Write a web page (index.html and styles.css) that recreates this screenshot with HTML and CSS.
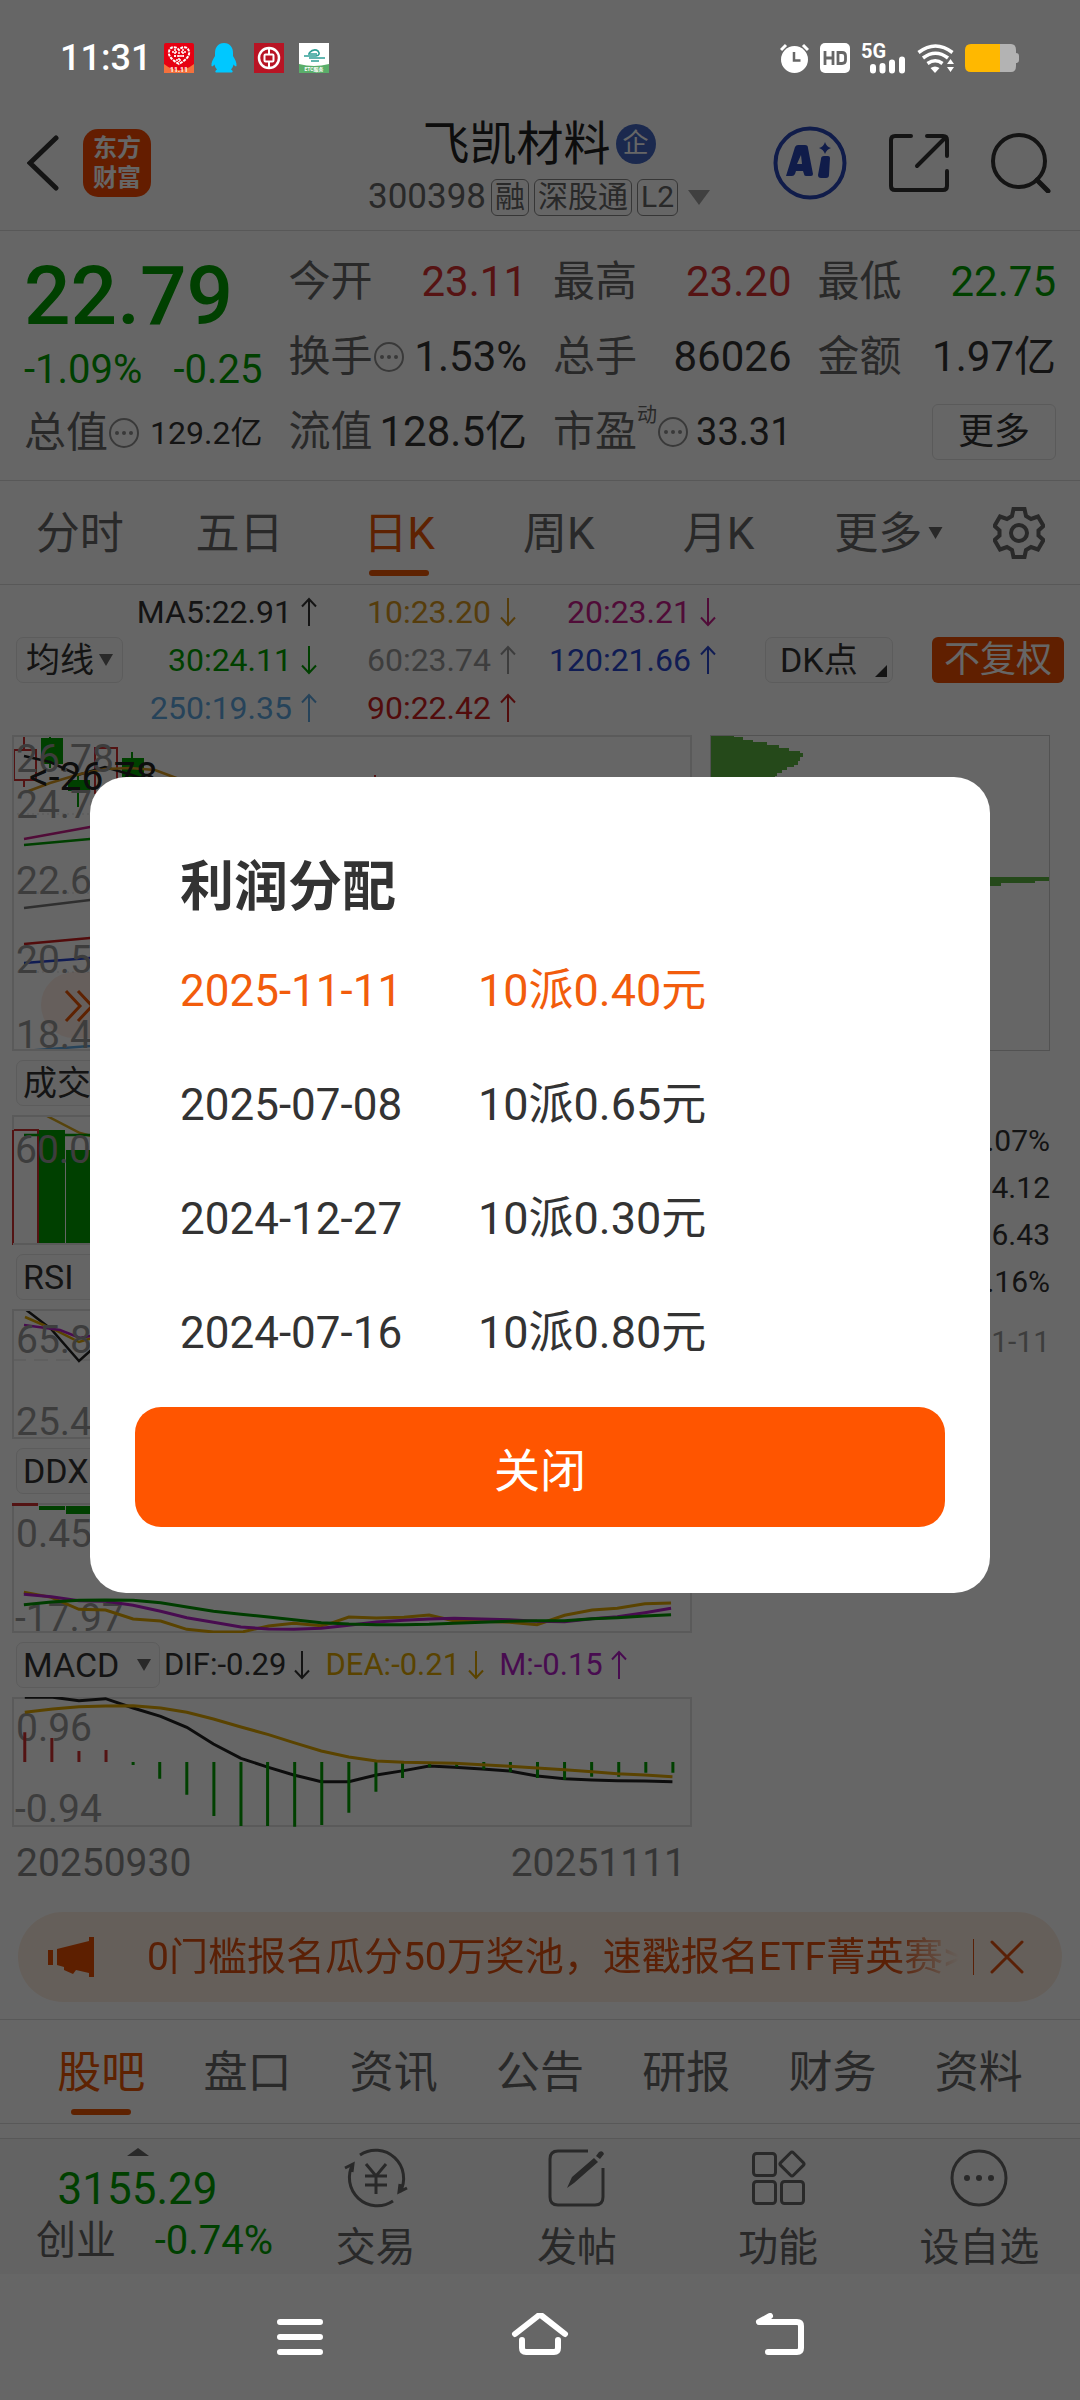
FILE: index.html
```html
<!DOCTYPE html>
<html lang="zh-CN">
<head>
<meta charset="utf-8">
<meta name="viewport" content="width=device-width, initial-scale=1">
<title>飞凯材料 300398</title>
<link rel="stylesheet" href="styles.css">
</head>
<body>
<svg class="defs" aria-hidden="true">
  <symbol id="up" viewBox="0 0 16 30"><path d="M8 29V2M1 9.500l7-7.500 7 7.500" fill="none" stroke="currentColor" stroke-width="2"/></symbol>
  <symbol id="down" viewBox="0 0 16 30"><path d="M8 1v27M1 20.500l7 7.500 7-7.500" fill="none" stroke="currentColor" stroke-width="2"/></symbol>
  <symbol id="caret" viewBox="0 0 14 12"><path d="M0 0h14L7 12z" fill="currentColor"/></symbol>
  <symbol id="more" viewBox="0 0 32 32"><circle cx="16" cy="16" r="14" fill="none" stroke="currentColor" stroke-width="2"/><g fill="currentColor"><circle cx="9" cy="16" r="2"/><circle cx="16" cy="16" r="2"/><circle cx="23" cy="16" r="2"/></g></symbol>
</svg>
<div class="screen">
  <div class="status">
    <time class="clock">11:31</time>
    <svg class="app" viewBox="0 0 30 30"><rect width="30" height="30" rx="2" fill="#e60012"/><path d="M0 21q15 12 30 0v9H0z" fill="#f5703c"/><path d="M15 21C8 17 4 13 5 8.500 6 3 12 3 15 7c3-4 9-4 10 1.500 1 4.500-3 8.500-10 12.500z" fill="#e60012" stroke="#fff" stroke-width="2" stroke-dasharray="3 1"/><path d="M8 9h5M17 9h5M10 13h10M12 17h6M11 6v9M19 6v9M15 9v10" stroke="#fff" stroke-width="1.500" stroke-dasharray="2 1"/><text x="15" y="29" font-size="7" font-weight="700" text-anchor="middle" fill="#fff">11.11</text></svg>
    <svg class="app" viewBox="0 0 30 30"><path d="M15 0C9 0 6 4.500 6 10v3c-2 3-4 7-3.500 10 1 1 2-.5 3-1.500.5 2 1 3.500 2.500 5-2 1-2.500 3 0 3h14c2.500 0 2-2 0-3 1.500-1.500 2-3 2.500-5 1 1 2 2.500 3 1.500.5-3-1.500-7-3.500-10v-3C24 4.500 21 0 15 0z" fill="#00c8ff"/></svg>
    <svg class="app" viewBox="0 0 30 30"><rect width="30" height="30" fill="#b81424"/><circle cx="15" cy="15" r="10" fill="none" stroke="#fff" stroke-width="2.500"/><rect x="10.500" y="11.500" width="9" height="7" rx="1" fill="none" stroke="#fff" stroke-width="2"/><path d="M15 5v6M15 19v6" stroke="#fff" stroke-width="2"/></svg>
    <svg class="app" viewBox="0 0 30 30"><rect width="30" height="30" fill="#fff"/><path d="M0 21q15 4 30 0v9H0z" fill="#5aae6a"/><path d="M10 10q5-5 9-2 3 4-2 5H5M9 11h9M10 15h16M12 18h8" fill="none" stroke="#2f9f96" stroke-width="1.600"/><text x="15" y="28" font-size="5" font-weight="700" text-anchor="middle" fill="#fff">ETC服务</text></svg>
    <span class="spacer"></span>
    <svg class="alarm" viewBox="0 0 29 30"><circle cx="14.500" cy="16.500" r="13.500" fill="#fff"/><path d="M1 7l5-5M28 7l-5-5" stroke="#fff" stroke-width="3"/><path d="M14 9v8.500h6.500" fill="none" stroke="#666" stroke-width="2.500"/></svg>
    <svg class="hd" viewBox="0 0 30 30"><rect width="30" height="30" rx="5" fill="#fff"/><path d="M5 8v14M13 8v14M5 15h8M18 9.500h4q3.500 0 3.500 3.500v4q0 3.500-3.500 3.500h-4z" fill="none" stroke="#666" stroke-width="2.800"/></svg>
    <svg class="signal" viewBox="0 0 45 30"><text x="0" y="15" font-size="20" font-weight="700" fill="#fff">5G</text><path d="M12 24v3.500M21.500 23v4.500M31 19.500v8M41 16.500v11" stroke="#fff" stroke-width="6" stroke-linecap="round"/></svg>
    <svg class="wifi" viewBox="0 0 37 30"><g fill="none" stroke="#fff" stroke-width="3.500"><path d="M1.500 9.500q17-13 34 0M6 15q12.500-9.500 25 0M10.500 20.500q8-5.500 15 0"/></g><path d="M13.500 25q4.500-3 9 0L18 30z" fill="#fff"/><path d="M30 21l3.500-5 3.500 5zM30 24l3.500 5 3.500-5z" fill="#fff"/></svg>
    <svg class="battery" viewBox="0 0 54 28"><path d="M6 0h40q5 0 5 6v3q3 0 3 3v4q0 3-3 3v3q0 6-5 6H6z" fill="#b3b3b3"/><path d="M35 0H6Q0 0 0 6v16q0 6 6 6h29z" fill="#ffb800"/></svg>
  </div>

  <header class="header">
    <div class="header-left">
      <button class="icon-btn" aria-label="返回"><svg class="back" viewBox="0 0 32 56"><path d="M29 3L3 28l26 25" fill="none" stroke="#333" stroke-width="5" stroke-linecap="round"/></svg></button>
      <a class="logo" href="#">东方<br>财富</a>
    </div>
    <div class="stock">
      <h1>飞凯材料<span class="corp">企</span></h1>
      <div class="code">300398<span class="tag">融</span><span class="tag">深股通</span><span class="tag">L2</span><svg class="drop" viewBox="0 0 22 15"><path d="M0 0h22L11 15z" fill="#a0a0a0"/></svg></div>
    </div>
    <div class="header-right">
      <button class="icon-btn" aria-label="AI"><svg class="ai" viewBox="0 0 74 74"><circle cx="37" cy="37" r="34.500" fill="none" stroke="#2a48b8" stroke-width="4"/><path d="M13 50L22 21q1-2 3-2h7q3 0 3 3l5 26q0 2-2 2h-5q-2 0-2-2l-1-3h-7l-1 3q-1 2-3 2zM24 38h5l-1-9zM48 33q0-3 3-3h4q2 0 2 2l-1 17q0 3-3 3h-5q-3 0-3-3zM52 16q1.500 5 6 6-4.500 1.500-6 6-1.500-4.500-6-6 4.500-1 6-6z" fill="#2a48b8" fill-rule="evenodd"/></svg></button>
      <button class="icon-btn" aria-label="分享"><svg class="share" viewBox="0 0 60 60"><path d="M22 3H6Q2 3 2 7v46q0 4 4 4h48q4 0 4-4V38M38 3h16q4 0 4 4v16M56 5L28 33" fill="none" stroke="#333" stroke-width="4" stroke-linecap="round"/></svg></button>
      <button class="icon-btn" aria-label="搜索"><svg class="search" viewBox="0 0 60 60"><circle cx="28" cy="28" r="26" fill="none" stroke="#333" stroke-width="4"/><path d="M46 47l11 11" stroke="#333" stroke-width="5" stroke-linecap="round"/></svg></button>
    </div>
  </header>

  <section class="quote">
    <div class="main">
      <strong class="price">22.79</strong>
      <div class="change"><span>-1.09%</span><span>-0.25</span></div>
      <div class="stat cap"><span>总值</span><svg class="info"><use href="#more"/></svg><b>129.2亿</b></div>
    </div>
    <div class="stat"><span>今开</span><b class="red">23.11</b></div>
    <div class="stat"><span>最高</span><b class="red">23.20</b></div>
    <div class="stat"><span>最低</span><b class="green">22.75</b></div>
    <div class="stat"><span>换手</span><svg class="info"><use href="#more"/></svg><b>1.53%</b></div>
    <div class="stat"><span>总手</span><b>86026</b></div>
    <div class="stat"><span>金额</span><b>1.97亿</b></div>
    <div class="stat"><span>流值</span><b>128.5亿</b></div>
    <div class="stat pe"><span>市盈</span><sup>动</sup><svg class="info"><use href="#more"/></svg><b>33.31</b></div>
    <div class="stat end"><button class="more">更多</button></div>
  </section>

  <nav class="periods">
    <a href="#">分时</a><a href="#">五日</a><a href="#" class="on">日K</a><a href="#">周K</a><a href="#">月K</a>
    <a href="#">更多<svg class="tri"><use href="#caret"/></svg></a>
    <button class="icon-btn gear-btn" aria-label="设置"><svg class="gear" viewBox="0 0 52 52"><path d="M20.500 2h11L33 9l5 3 7-2.500 5.500 9.500-5 4.500v5l5 4.500-5.500 9.500L38 40l-5 3-1.500 7h-11L19 43l-5-3-7 2.500L1.500 33l5-4.500v-5l-5-4.500L7 9.500l7 2.500 5-3z" fill="none" stroke="#666" stroke-width="4"/><circle cx="26" cy="26" r="8" fill="none" stroke="#666" stroke-width="4"/></svg></button>
  </nav>

  <section class="ma">
    <button class="chip">均线<svg class="caret"><use href="#caret"/></svg></button>
    <div class="ma-grid">
      <span class="c-dark">MA5:22.91<svg class="arr"><use href="#up"/></svg></span>
      <span class="c-gold">10:23.20<svg class="arr"><use href="#down"/></svg></span>
      <span class="c-pink">20:23.21<svg class="arr"><use href="#down"/></svg></span>
      <span class="c-green">30:24.11<svg class="arr"><use href="#down"/></svg></span>
      <span class="c-gray">60:23.74<svg class="arr"><use href="#up"/></svg></span>
      <span class="c-blue">120:21.66<svg class="arr"><use href="#up"/></svg></span>
      <span class="c-sky">250:19.35<svg class="arr"><use href="#up"/></svg></span>
      <span class="c-red">90:22.42<svg class="arr"><use href="#up"/></svg></span>
    </div>
    <button class="chip dk">DK点<svg class="corner" viewBox="0 0 12 12"><path d="M12 0v12H0z" fill="#333"/></svg></button>
    <button class="adjust">不复权</button>
  </section>

  <section class="charts">
    <div class="left">
      <svg class="chart" viewBox="0 0 680 316">
        <path class="grid dots" d="M0 79h680M0 158h680M0 237h680"/>
        <g fill="none" stroke="#d03030" stroke-width="2"><path d="M2 15h22v30H2zM12 0v15M12 45v7M83 13h22v45H83zM363 40v20"/></g>
        <path d="M29 3h22v26H29zM56 45h22v11H56zM110 23h22v19h-22z" fill="#00a000"/>
        <path d="M38 1v32M66 40v32M120 17v30" stroke="#00a000" stroke-width="2"/>
        <g fill="none" stroke-width="2.500">
          <path d="M12 21l26 6 28 13 27-8 27 8 14 5" stroke="#222"/>
          <path d="M14 57l24-9 30-9 25-5 25-1 25 2 24 9" stroke="#d8981e"/>
          <path d="M12 104l66-12 30-5" stroke="#c81e8c"/><path d="M12 110l66-6 30-3" stroke="#00a000"/>
          <path d="M12 173l66-8 30-3" stroke="#777"/><path d="M12 209l66-6 30-2" stroke="#cc1f1f"/>
          <path d="M12 228l66-5 30-2" stroke="#2a46d0"/><path d="M12 316l66-5 30-3" stroke="#60a8e0"/>
        </g>
        <rect x="29" y="237" width="100" height="66" rx="33" fill="#ff6a2a" fill-opacity=".12"/>
        <path d="M54 256l14 15-14 15M66 256l14 15-14 15" fill="none" stroke="#ea5504" stroke-width="3"/>
        <g class="axis"><text x="4" y="37">26.78</text><text x="4" y="83">24.7</text><text x="4" y="159">22.6</text><text x="4" y="238">20.5</text><text x="4" y="313">18.4</text></g>
        <text class="peak" x="17" y="55">&lt;-26.78</text>
        <rect class="frame" x="1" y="1" width="678" height="314"/>
      </svg>
      <div class="ind"><button class="chip">成交</button></div>
      <svg class="chart" viewBox="0 0 680 130">
        <path d="M27 15h26v114H27zM54 35h27v94H54z" fill="#00a000"/><rect x="1" y="15" width="25" height="114" fill="none" stroke="#d03030" stroke-width="2"/>
        <path d="M33 0l35 18 30 8" fill="none" stroke="#d8a81e" stroke-width="2.500"/><path d="M12 20h80" stroke="#00a000" stroke-width="2.500"/>
        <g class="axis"><text x="3" y="48">60.0</text></g>
        <path class="frame" d="M1 15V1h678v128H1"/>
      </svg>
      <div class="ind"><button class="chip">RSI<svg class="caret"><use href="#caret"/></svg></button></div>
      <svg class="chart" viewBox="0 0 680 130">
        <path class="grid dash" d="M0 51h680"/>
        <g fill="none" stroke-width="2.500"><path d="M13 0l26 20 28 32 20-18" stroke="#222"/><path d="M13 8l30 13 24 12 20-6" stroke="#e0a800"/><path d="M12 16l36 5 20 8 20-4" stroke="#b41ec8"/></g>
        <g class="axis"><text x="4" y="44">65.8</text><text x="4" y="126">25.4</text></g>
        <rect class="frame" x="1" y="1" width="678" height="128"/>
      </svg>
      <div class="ind"><button class="chip">DDX</button></div>
      <svg class="chart" viewBox="0 0 680 130">
        <g class="axis"><text x="4" y="44">0.45</text><text x="3" y="128">-17.97</text></g>
        <rect class="frame" x="1" y="1" width="678" height="128"/>
        <path d="M0 0h26v3H0z" fill="#d03030"/><path d="M27 3h26v4H27zM54 3h27v8H54z" fill="#00a000"/>
        <g class="series" transform="translate(-12 57) scale(.459 .3333)">
          <polyline stroke="#e0a800" points="52,97 112,112 172,148 230,150 290,177 350,183 407,208 465,216 530,215 585,198 640,190 700,197 720,190 760,171 820,174 880,172 935,165 990,183 1050,184 1110,187 1170,194 1230,166 1290,150 1345,145 1405,131 1462,129"/>
          <polyline stroke="#b41ec8" points="52,103 112,110 172,122 230,124 290,136 350,154 407,173 465,187 525,201 585,207 640,208 700,205 760,196 820,186 880,181 935,177 990,175 1050,177 1110,179 1170,184 1230,185 1290,176 1345,170 1405,158 1462,145"/>
          <polyline stroke="#009a00" points="52,134 112,126 172,121 230,120 290,121 350,128 407,141 465,154 525,163 585,171 640,179 700,188 760,192 820,194 880,194 935,193 990,190 1050,187 1110,184 1170,182 1230,182 1290,176 1345,173 1405,168 1462,164"/>
        </g>
      </svg>
      <div class="ind">
        <button class="chip wide">MACD<svg class="caret"><use href="#caret"/></svg></button>
        <span class="val c-dark">DIF:-0.29<svg class="arr"><use href="#down"/></svg></span>
        <span class="val c-dea">DEA:-0.21<svg class="arr"><use href="#down"/></svg></span>
        <span class="val c-violet">M:-0.15<svg class="arr"><use href="#up"/></svg></span>
      </div>
      <svg class="chart" viewBox="0 0 680 130">
        <g class="axis"><text x="4" y="44">0.96</text><text x="3" y="125">-0.94</text></g>
        <rect class="frame" x="1" y="1" width="678" height="128"/>
        <g class="series" transform="translate(-12 -137) scale(.459 .3333)">
          <polyline stroke="#222" points="54,412 115,412 172,422 230,416 290,444 350,469 407,502 465,552 525,595 585,622 640,645 700,665 760,665 820,645 880,632 935,618 990,622 1050,627 1110,633 1170,648 1230,656 1290,660 1345,662 1405,663 1465,665"/>
          <path stroke="#d03030" d="M54 606V517M113 606V534M172 606V573M231 606V570"/>
          <path stroke="#00a000" d="M290 606v9M348 606v50M407 606v98M466 606v162M525 606v192M583 606v192M642 606v194M701 606v189M760 606v152M819 606v89M877 606v48M936 606v16M995 606v14M1054 606v22M1112 606v30M1171 606v48M1230 606v53M1289 606v44M1348 606v44M1407 606v32M1466 606v32"/>
          <polyline stroke="#e0a800" points="54,457 115,447 172,440 230,438 290,437 350,444 407,457 465,477 525,501 585,524 640,548 700,573 760,591 820,603 880,607 935,608 990,610 1050,614 1110,619 1170,624 1230,629 1290,635 1345,641 1405,645 1465,650"/>
        </g>
      </svg>
      <div class="dates"><span>20250930</span><span>20251111</span></div>
    </div>
    <div class="right">
      <svg class="chart" viewBox="0 0 340 316">
        <path d="M0 0h24v2h9v3h10v2h14v3h12v3h10v3h11v2h3v4h-3v4h-2v4h-4v2h-7v3h-5v3h-5v3h-2v4h6v4H0z" fill="#5cb643"/>
        <path d="M200 142h139v4h-14v2h-34v3h-91z" fill="#5cb643"/>
        <rect x="0.500" y="0.500" width="339" height="315" fill="none" stroke="#ccc"/>
      </svg>
      <div class="figures"><span>.07%</span><span>4.12</span><span>6.43</span><span>.16%</span><span class="when">1-11</span></div>
    </div>
  </section>

  <aside class="banner">
    <svg class="horn" viewBox="0 0 46 40"><path d="M0 13h5v15H0zM9 12L41 4V0h5v40h-5v-4l-13-3-3 4-9-4v-3l-7-2z" fill="#e84e00"/></svg>
    <a class="notice" href="#">0门槛报名瓜分50万奖池，速戳报名ETF菁英赛&gt;&gt;</a>
    <span class="rule"></span>
    <button class="icon-btn" aria-label="关闭通知"><svg class="close" viewBox="0 0 34 34"><path d="M2 2l30 30M32 2L2 32" stroke="#e05010" stroke-width="3" stroke-linecap="round"/></svg></button>
  </aside>

  <nav class="sections">
    <a href="#" class="on">股吧</a><a href="#">盘口</a><a href="#">资讯</a><a href="#">公告</a><a href="#">研报</a><a href="#">财务</a><a href="#">资料</a>
  </nav>

  <footer class="bottom">
    <a class="index" href="#">
      <svg class="peek" viewBox="0 0 22 8"><path d="M0 8L11 0l11 8z" fill="#666"/></svg>
      <span class="points">3155.29</span>
      <span class="pair"><span>创业</span><span class="green">-0.74%</span></span>
    </a>
    <button class="tool"><svg viewBox="0 0 66 60"><g fill="none" stroke="#666" stroke-width="3"><path d="M17 7A28 28 0 0 1 57 44M64 40l-8 4 1-8"/><path d="M50 53A28 28 0 0 1 10 16M2 20l8-4-1 8"/><path d="M23 16l10 12 10-12M22 28h22M22 37h22M33 28v18"/></g></svg>交易</button>
    <button class="tool"><svg viewBox="0 0 66 60"><path d="M44 3H14Q6 3 6 11v38q0 8 8 8h37q8 0 8-8V20" fill="none" stroke="#666" stroke-width="3"/><path d="M23 40l5-11 22-19 4 4-24 21zM52 8l3-4q4-2 5 2l-4 5z" fill="#666"/></svg>发帖</button>
    <button class="tool"><svg viewBox="0 0 66 60"><g fill="none" stroke="#666" stroke-width="3"><rect x="8.500" y="5.500" width="22" height="22" rx="3"/><rect x="8.500" y="33.500" width="22" height="22" rx="3"/><rect x="36.500" y="33.500" width="22" height="22" rx="3"/><rect x="38" y="7" width="18" height="18" rx="2" transform="rotate(45 47 16)"/></g></svg>功能</button>
    <button class="tool"><svg viewBox="0 0 66 60"><circle cx="33" cy="30" r="27" fill="none" stroke="#666" stroke-width="3"/><g fill="#666"><circle cx="21" cy="30" r="3"/><circle cx="33" cy="30" r="3"/><circle cx="45" cy="30" r="3"/></g></svg>设自选</button>
  </footer>

  <div class="sysnav">
    <button class="icon-btn" aria-label="最近任务"><svg viewBox="0 0 60 48"><path d="M10 9h40M10 24h40M10 39h40" stroke="#fff" stroke-width="6" stroke-linecap="round"/></svg></button>
    <button class="icon-btn" aria-label="主屏幕"><svg viewBox="0 0 60 48"><path d="M5 21L28 3q2-1.500 4 0l23 18M12 27v8q0 4 4 4h28q4 0 4-4v-8" fill="none" stroke="#fff" stroke-width="6" stroke-linecap="round"/></svg></button>
    <button class="icon-btn" aria-label="返回上一页"><svg viewBox="0 0 60 48"><path d="M20 3L9 9h38q4 0 4 4v22q0 4-4 4H18" fill="none" stroke="#fff" stroke-width="6" stroke-linecap="round" stroke-linejoin="round"/></svg></button>
  </div>

  <div class="mask">
    <div class="dialog" role="dialog" aria-modal="true" aria-labelledby="dlg-title">
      <h2 id="dlg-title">利润分配</h2>
      <table>
        <tr class="latest"><td>2025-11-11</td><td>10派0.40元</td></tr>
        <tr><td>2025-07-08</td><td>10派0.65元</td></tr>
        <tr><td>2024-12-27</td><td>10派0.30元</td></tr>
        <tr><td>2024-07-16</td><td>10派0.80元</td></tr>
      </table>
      <button class="dismiss">关闭</button>
    </div>
  </div>
</div>
</body>
</html>
```
FILE: styles.css
```css
* { box-sizing: border-box; }

body {
  margin: 0;
  background: #fff;
  color: #333;
  font-family: Roboto, "Noto Sans CJK SC", sans-serif;
}

a { color: inherit; text-decoration: none; }
h1, h2 { margin: 0; }
svg { display: block; flex: none; }
svg text { font-family: Roboto, "Noto Sans CJK SC", sans-serif; }

button {
  margin: 0;
  padding: 0;
  border: 0;
  background: none;
  color: inherit;
  font: inherit;
  white-space: nowrap;
}

.defs { position: absolute; width: 0; height: 0; }
.icon-btn { display: flex; align-items: center; justify-content: center; }

.screen {
  position: relative;
  display: flex;
  flex-direction: column;
  min-height: 100vh;
}

/* System status bar, drawn over the mask */
.status {
  position: relative;
  z-index: 2;
  display: flex;
  align-items: center;
  gap: 11px;
  height: 116px;
  padding: 0 61px 0 60px;
}
.clock { color: #fff; font-size: 36px; font-weight: 500; line-height: 42px; margin-right: 2px; }
.app { width: 30px; height: 30px; margin-right: 4px; }
.spacer { flex: 1; }
.alarm { width: 29px; height: 30px; }
.hd { width: 30px; height: 30px; }
.signal { width: 45px; height: 30px; overflow: visible; }
.wifi { width: 37px; height: 30px; }
.battery { width: 54px; height: 28px; }

/* Title bar */
.header {
  display: grid;
  grid-template-columns: 1fr auto 1fr;
  height: 114px;
  padding: 0 29px 0 27px;
}
.header-left, .header-right { display: flex; align-items: center; height: 94px; }
.header-left { gap: 24px; }
.header-right { justify-content: flex-end; gap: 42px; }
.back { width: 32px; height: 56px; }
.logo {
  width: 68px;
  height: 68px;
  padding-top: 4px;
  border-radius: 15px;
  background: #fa4a00;
  color: #fff;
  font-size: 24px;
  font-weight: 700;
  line-height: 30px;
  text-align: center;
}
.ai { width: 74px; height: 74px; }
.share, .search { width: 60px; height: 60px; }
.stock { display: flex; flex-direction: column; align-items: center; }
.stock h1 {
  display: flex;
  align-items: center;
  gap: 5px;
  color: #222;
  font-size: 47px;
  font-weight: 400;
  line-height: 56px;
}
.corp {
  width: 40px;
  height: 40px;
  border-radius: 50%;
  background: #4468c4;
  color: #fff;
  font-size: 26px;
  line-height: 38px;
  text-align: center;
}
.code {
  display: flex;
  align-items: center;
  gap: 5px;
  color: #666;
  font-size: 35px;
  line-height: 50px;
}
.tag {
  height: 37px;
  padding: 0 3px;
  border: 1px solid #888;
  border-radius: 6px;
  font-size: 30px;
  line-height: 34px;
}
.drop { width: 22px; height: 15px; margin-left: 5px; }

/* Quote summary */
.quote {
  display: grid;
  grid-template-columns: repeat(4, 1fr);
  grid-auto-rows: 75px;
  column-gap: 26px;
  padding: 13px 24px 11px;
  border-top: 1px solid #ddd;
}
.main { grid-row: span 3; display: flex; flex-direction: column; color: #00a000; }
.price { height: 100px; font-size: 82px; font-weight: 500; line-height: 104px; }
.change { display: flex; justify-content: space-between; height: 52px; font-size: 40px; line-height: 52px; }
.stat { display: flex; align-items: center; font-size: 42px; line-height: 50px; white-space: nowrap; }
.stat span { color: #666; }
.stat b { margin-left: auto; color: #333; font-weight: 400; }
.stat .red { color: #d83030; }
.stat .green, .green { color: #00a000; }
.info { width: 32px; height: 32px; color: #909090; }
.cap { height: 73px; }
.cap b { font-size: 32px; }
.pe b { font-size: 38px; }
.pe sup { align-self: flex-start; margin: 0; color: #666; font-size: 20px; line-height: 42px; }
.end { justify-content: flex-end; }
.more {
  width: 124px;
  height: 56px;
  border: 1px solid #e2e2e2;
  border-radius: 6px;
  font-size: 36px;
  line-height: 50px;
}

/* Chart period tabs */
.periods, .sections {
  display: flex;
  color: #666;
  font-size: 44px;
  border-top: 1px solid #ddd;
}
.periods a, .sections a {
  position: relative;
  flex: 1;
  height: 103px;
  line-height: 107px;
  text-align: center;
}
.on { color: #ea5504; }
.on::after {
  content: "";
  position: absolute;
  left: 50%;
  bottom: 8px;
  width: 60px;
  height: 6px;
  margin-left: -30px;
  border-radius: 3px;
  background: #ea5504;
}
.tri { position: absolute; left: calc(50% + 50px); top: 46px; width: 15px; height: 12px; }
.gear-btn { width: 122px; }
.gear { width: 52px; height: 52px; }

/* Moving averages */
.ma {
  display: flex;
  align-items: center;
  height: 151px;
  padding: 0 16px 0 16px;
  border-top: 1px solid #ddd;
}
.chip {
  display: flex;
  align-items: center;
  gap: 5px;
  height: 46px;
  padding: 0 9px;
  border: 1px solid #e6e6e6;
  border-radius: 7px;
  background: #fcfcfc;
  font-size: 34px;
  line-height: 40px;
}
.caret { width: 14px; height: 12px; color: #666; }
.ma-grid {
  flex: 1;
  display: grid;
  grid-template-columns: 194px 199px 200px;
  grid-auto-rows: 48px;
  font-size: 32px;
  line-height: 48px;
}
.ma-grid span { display: flex; align-items: center; justify-content: flex-end; gap: 9px; }
.arr { width: 16px; height: 30px; }
.dk { position: relative; width: 128px; margin-right: 39px; padding-left: 14px; }
.corner { position: absolute; right: 5px; bottom: 5px; width: 12px; height: 12px; }
.adjust {
  width: 132px;
  height: 46px;
  border-radius: 6px;
  background: #f04e00;
  color: #fff;
  font-size: 36px;
  line-height: 42px;
}
.c-dark { color: #333; }
.c-gold { color: #d8981e; }
.c-pink { color: #c81e8c; }
.c-green { color: #00a000; }
.c-gray { color: #999; }
.c-blue { color: #2a46d0; }
.c-sky { color: #60a8e0; }
.c-red { color: #cc1f1f; }
.c-dea { color: #e0a800; }
.c-violet { color: #b41ec8; }

/* Charts */
.charts {
  display: grid;
  grid-template-columns: 2fr 1fr;
  column-gap: 18px;
  padding: 0 30px 0 12px;
}
.chart { width: 100%; height: auto; }
.frame { fill: none; stroke: #e0e0e0; stroke-width: 2; }
.grid { fill: none; stroke: #ddd; stroke-width: 1; }
.dots { stroke-dasharray: 2 3; }
.dash { stroke-dasharray: 14 8; }
.axis { fill: #999; font-size: 39px; }
.peak { fill: #222; font-size: 39px; }
.series { fill: none; }
.series > * { vector-effect: non-scaling-stroke; stroke-width: 3; }
.ind { display: flex; align-items: center; height: 64px; padding-left: 4px; }
.ind .chip { min-width: 144px; padding: 0 8px 0 6px; justify-content: space-between; }
.val { display: flex; align-items: center; gap: 8px; margin: 0 11px 0 4px; font-size: 31px; line-height: 40px; }
.dates {
  display: flex;
  justify-content: space-between;
  padding: 10px 6px 0 4px;
  color: #888;
  font-size: 39px;
  line-height: 52px;
}
.figures {
  display: flex;
  flex-direction: column;
  padding-top: 66px;
  font-size: 30px;
  line-height: 47px;
  text-align: right;
}
.when { padding-top: 13px; color: #999; }

/* Notice */
.banner {
  display: flex;
  align-items: center;
  height: 90px;
  margin: 23px 18px 17px;
  padding: 0 38px 0 30px;
  border-radius: 45px;
  background: #fdeee1;
}
.horn { width: 46px; height: 40px; }
.notice {
  flex: 1;
  min-width: 0;
  margin: 0 14px 0 53px;
  overflow: hidden;
  color: #e05010;
  font-size: 39px;
  line-height: 60px;
  white-space: nowrap;
  -webkit-mask-image: linear-gradient(90deg, #000 92%, transparent);
  mask-image: linear-gradient(90deg, #000 92%, transparent);
}
.rule { width: 1px; height: 36px; margin-right: 16px; background: #e05010; }
.close { width: 34px; height: 34px; }

/* Content tabs */
.sections { padding: 0 28px; border-bottom: 1px solid #ddd; margin-bottom: 14px; }

/* App toolbar */
.bottom {
  display: flex;
  height: 136px;
  border-top: 1px solid #ddd;
  background: #f7f7f7;
  color: #666;
  font-size: 40px;
}
.index { width: 275px; flex: none; display: flex; flex-direction: column; align-items: center; padding-top: 9px; }
.peek { width: 22px; height: 8px; }
.points { color: #00a000; font-size: 44px; line-height: 66px; }
.pair { display: flex; align-self: stretch; justify-content: space-between; padding: 0 2px 0 36px; line-height: 38px; }
.tool { flex: 1; display: flex; flex-direction: column; align-items: center; padding-top: 9px; line-height: 80px; }
.tool svg { width: 66px; height: 60px; }

/* System navigation, drawn over the mask */
.sysnav {
  position: relative;
  z-index: 2;
  display: flex;
  justify-content: center;
  gap: 180px;
  height: 126px;
}
.sysnav svg { width: 60px; height: 48px; }

/* Dialog */
.mask {
  position: absolute;
  inset: 0;
  z-index: 1;
  display: flex;
  align-items: center;
  padding: 0 90px 30px;
  background: rgba(0, 0, 0, .6);
}
.dialog {
  flex: 1;
  padding: 72px 45px 66px;
  border-radius: 36px;
  background: #fff;
}
.dialog h2 { padding: 0 45px; font-size: 54px; font-weight: 700; line-height: 78px; }
.dialog table { margin: 7px 45px 17px; border-collapse: collapse; font-size: 45px; line-height: 54px; }
.dialog td { height: 114px; padding: 0; }
.dialog td:first-child { width: 298px; font-size: 44px; }
.latest { color: #f25c0c; }
.dismiss {
  display: block;
  width: 100%;
  height: 120px;
  border-radius: 26px;
  background: #ff5500;
  color: #fff;
  font-size: 46px;
}
```
